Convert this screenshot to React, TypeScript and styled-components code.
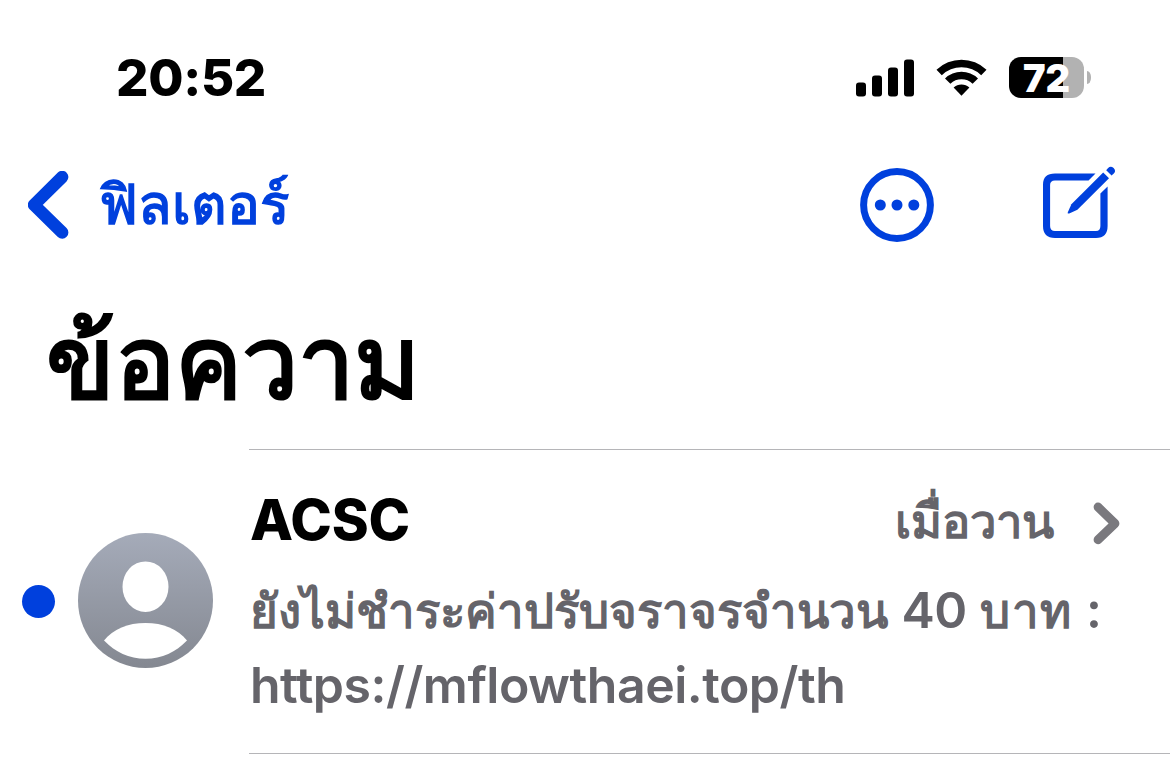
import styled, { createGlobalStyle } from "styled-components"

export default function App() {
  return (
    <Screen>
      <GlobalStyle />
      <StatusBar>
        <Time>20:52</Time>
        <StatusIcons>
          <SignalIcon />
          <WifiIcon />
          <Battery>
            <BatteryBody>
              <BatteryLevel>72</BatteryLevel>
            </BatteryBody>
            <BatteryTip />
          </Battery>
        </StatusIcons>
      </StatusBar>
      <NavBar>
        <BackButton type="button">
          <BackIcon />
          <BackLabel>ฟิลเตอร์</BackLabel>
        </BackButton>
        <NavActions>
          <MoreIcon />
          <ComposeIcon />
        </NavActions>
      </NavBar>
      <Title>ข้อความ</Title>
      <Conversation>
        <UnreadDot />
        <Avatar />
        <Content>
          <ContentHeader>
            <Sender>ACSC</Sender>
            <DateLabel>เมื่อวาน</DateLabel>
            <ChevronIcon />
          </ContentHeader>
          <Preview>
            <Thai>ยังไม่ชำระค่าปรับจราจรจำนวน</Thai> 40{" "}
            <Thai $spacing={1.4}>บาท</Thai> :
            <br />
            https://mflowthaei.top/th
          </Preview>
        </Content>
      </Conversation>
    </Screen>
  )
}

const SignalIcon = () => (
  <svg width="58" height="38" viewBox="0 0 58 38">
    <rect x="0" y="23.5" width="10" height="14" rx="3" />
    <rect x="16" y="16.5" width="10" height="21" rx="3" />
    <rect x="32" y="8.5" width="10" height="29" rx="3" />
    <rect x="48" y="0.5" width="10" height="37" rx="3" />
  </svg>
)

const WifiIcon = () => (
  <svg width="52" height="38" viewBox="0 0 52 38">
    <path d="M0.5 10.8 A36 36 0 0 1 50.5 10.8 L45.2 16.2 A28.4 28.4 0 0 0 5.8 16.2 Z" />
    <path d="M9 19.4 A24 24 0 0 1 42 19.4 L36.6 24.8 A16 16 0 0 0 14.4 24.8 Z" />
    <path d="M17.6 28.6 A11.5 11.5 0 0 1 33.4 28.6 L25.5 36.8 Z" />
  </svg>
)

const BackIcon = () => (
  <svg width="42" height="68" viewBox="0 0 42 68" fill="none">
    <path
      d="M34.2 6 L6 33.8 L34.2 61.5"
      stroke="currentColor"
      strokeWidth="12.4"
      strokeLinecap="round"
      strokeLinejoin="round"
    />
  </svg>
)

const MoreIcon = () => (
  <svg width="74" height="74" viewBox="0 0 74 74" fill="currentColor">
    <circle
      cx="37"
      cy="37"
      r="33.4"
      fill="none"
      stroke="currentColor"
      strokeWidth="7"
    />
    <circle cx="20.3" cy="37" r="5.5" />
    <circle cx="37" cy="37" r="5.5" />
    <circle cx="53.8" cy="37" r="5.5" />
  </svg>
)

const ComposeIcon = () => (
  <svg width="74" height="78" viewBox="0 0 74 78" fill="currentColor">
    <path d="M52.5 7.4 H12 Q0 7.4 0 18.4 V60 Q0 72 12 72 H53 Q64.6 72 64.6 60 V20.4 L57.4 27.6 V60 Q57.4 65 53 65 H12 Q7.1 65 7.1 60 V19 Q7.1 14.4 12 14.4 H45.5 Z" />
    <path d="M60.2 6.4 L66 12.2 L34.4 43.7 L26.2 47.4 Q24 48.2 24.9 46 L28.4 38.2 Z" />
    <path d="M63.2 4.3 L65.1 2.1 Q67.6 -0.7 70.6 2.1 Q73.4 5 70.8 7.6 L68.6 9.6 Z" />
  </svg>
)

const ChevronIcon = () => (
  <svg width="28" height="44" viewBox="0 0 28 44" fill="none">
    <path
      d="M5 5 L22 21.5 L5 37.8"
      stroke="#7a797e"
      strokeWidth="8.8"
      strokeLinecap="round"
      strokeLinejoin="round"
    />
  </svg>
)

const Avatar = () => (
  <AvatarImage width="135" height="135" viewBox="0 0 135 135">
    <defs>
      <linearGradient id="avatar" x1="0" y1="0" x2="0" y2="1">
        <stop offset="0" stopColor="#a5abb9" />
        <stop offset="1" stopColor="#848891" />
      </linearGradient>
    </defs>
    <circle cx="67.5" cy="67.5" r="67.5" fill="url(#avatar)" />
    <ellipse cx="67.5" cy="53.7" rx="23" ry="25.3" fill="#fff" />
    <path
      d="M26 107.5 C35 96 50 90 67.5 90 C85 90 100 96 109 107.5 C98 119 84 125.7 67.5 125.7 C51 125.7 37 119 26 107.5 Z"
      fill="#fff"
    />
  </AvatarImage>
)

const GlobalStyle = createGlobalStyle`
  body {
    margin: 0;
    background-color: #fff;
    font-family: Inter, "Liberation Sans", sans-serif;
  }
  svg {
    display: block;
    flex-shrink: 0;
  }
`

const Screen = styled.div`
  width: 1170px;
  height: 779px;
  overflow: hidden;
  color: #000;
`

const StatusBar = styled.div`
  box-sizing: border-box;
  height: 155px;
  padding: 57px 79px 0 116px;
  display: flex;
  align-items: flex-start;
  justify-content: space-between;
`

const Time = styled.span`
  font-size: 51px;
  font-weight: 800;
  line-height: 42px;
  letter-spacing: -0.3px;
`

const StatusIcons = styled.div`
  display: flex;
  align-items: center;
  gap: 22px;

  svg + div {
    margin-left: -1px;
  }
`

const Battery = styled.div`
  display: flex;
  align-items: center;
  gap: 3px;
`

const BatteryBody = styled.div`
  width: 75px;
  height: 41px;
  border-radius: 12px;
  background: linear-gradient(to right, #000 54px, #b2b2b2 54px);
  display: flex;
  justify-content: center;
`

const BatteryLevel = styled.span`
  color: #fff;
  font-size: 38px;
  font-weight: 900;
  line-height: 42px;
`

const BatteryTip = styled.div`
  width: 4px;
  height: 13px;
  border-radius: 0 4px 4px 0 / 0 6px 6px 0;
  background-color: #b2b2b2;
`

const NavBar = styled.div`
  height: 100px;
  padding: 0 53px 0 28px;
  display: flex;
  align-items: center;
  justify-content: space-between;
  color: #0040dd;
`

const BackButton = styled.button`
  display: flex;
  align-items: center;
  gap: 29px;
  padding: 0;
  border: 0;
  background: none;
  color: inherit;
  font: inherit;
`

const BackLabel = styled.span`
  font-size: 54.8px;
  line-height: 68px;
  margin-top: -3px;
  white-space: nowrap;
  -webkit-text-stroke: 1.6px currentColor;
`

const NavActions = styled.div`
  display: flex;
  align-items: center;
  gap: 109px;
`

const Title = styled.h1`
  margin: 0;
  height: 194px;
  padding-left: 46px;
  font-size: 100.5px;
  font-weight: 700;
  line-height: 214px;
`

const Conversation = styled.div`
  display: flex;
  align-items: center;
  height: 305px;
  padding-left: 22px;
`

const UnreadDot = styled.div`
  width: 33px;
  height: 33px;
  margin-right: 23px;
  border-radius: 50%;
  background-color: #0040dd;
`

const AvatarImage = styled.svg`
  margin-bottom: 2px;
`

const Content = styled.div`
  box-sizing: border-box;
  flex: 1;
  height: 305px;
  margin-left: 36px;
  padding: 35px 0 0 1px;
  border-top: 1px solid #b5b5b8;
  border-bottom: 1px solid #b5b5b8;
`

const ContentHeader = styled.div`
  display: flex;
  align-items: center;
  height: 78px;
  padding-right: 49px;
`

const Sender = styled.span`
  flex: 1;
  margin-top: -7px;
  font-size: 56px;
  font-weight: 800;
  letter-spacing: -0.2px;
  line-height: 75px;
`

const DateLabel = styled.span`
  margin: -7px 39px 0 0;
  color: #65646a;
  font-size: 47.2px;
  line-height: 75px;
  -webkit-text-stroke: 1.5px currentColor;
`

const Preview = styled.p`
  margin: 10px 0 0;
  color: #65646a;
  font-size: 50px;
  font-weight: 600;
  line-height: 75px;
  letter-spacing: -0.5px;
  word-spacing: 1.4px;
  white-space: nowrap;
`

const Thai = styled.span<{ $spacing?: number }>`
  font-size: 47.4px;
  font-weight: 400;
  line-height: 1;
  letter-spacing: ${(p) => p.$spacing ?? 0}px;
  -webkit-text-stroke: 1.5px currentColor;
`
